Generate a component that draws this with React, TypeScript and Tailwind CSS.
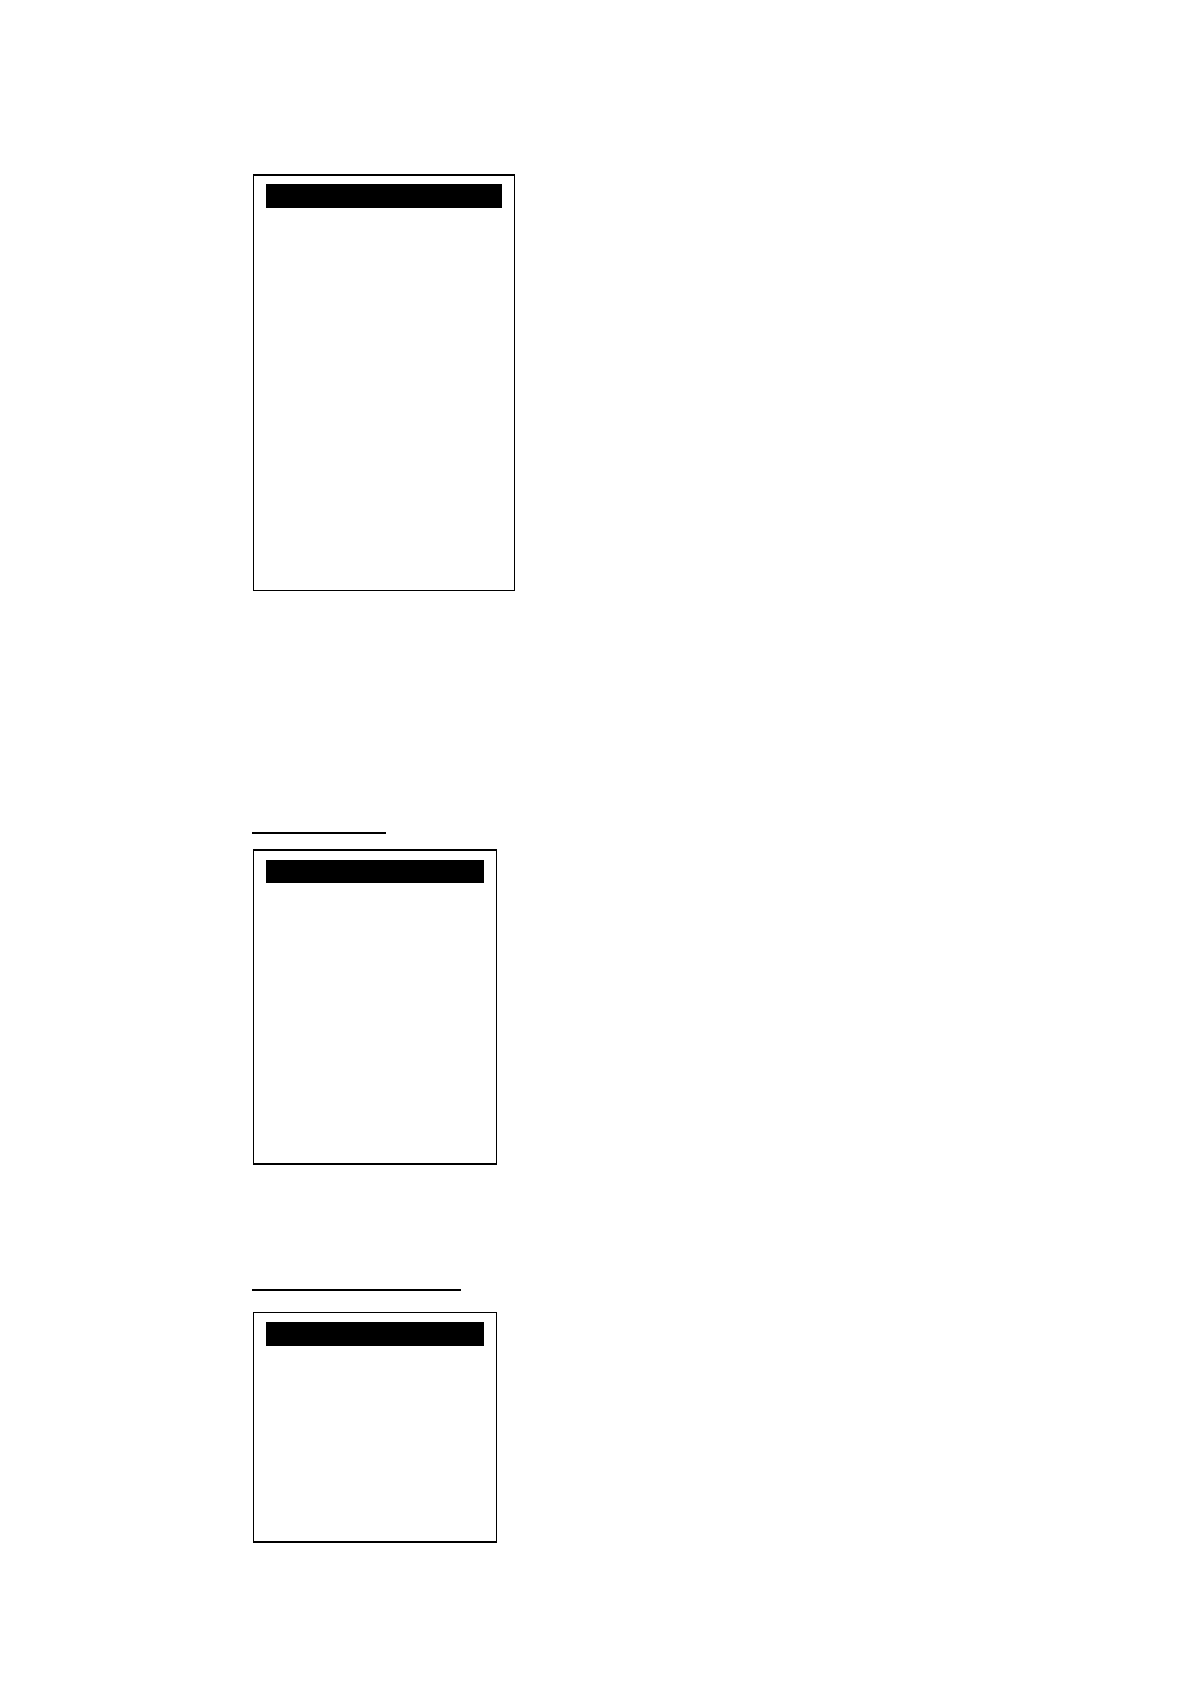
import React, { ReactElement } from "react";

interface PanelProps {
  className: string;
  barClassName: string;
}

function Panel({ className, barClassName }: PanelProps): ReactElement {
  return (
    <section className={`ml-px w-full border-black px-3 ${className}`}>
      <div className={`bg-black ${barClassName}`} />
    </section>
  );
}

export default function App(): ReactElement {
  return (
    <main className="min-h-screen bg-white pt-[174px] pb-32 pl-[252px] pr-8">
      <Panel
        className="max-w-[262px] min-h-[417px] border border-t-2 pt-2"
        barClassName="h-6"
      />

      <div className="mt-[241px]">
        <hr className="w-full max-w-[134px] border-t-2 border-black mb-[15px]" />
        <Panel
          className="max-w-[244px] min-h-[316px] border-x border-y-2 pt-[9px]"
          barClassName="h-[23px]"
        />
      </div>

      <div className="mt-31">
        <hr className="w-full max-w-[209px] border-t-2 border-black mb-[21px]" />
        <Panel
          className="max-w-[244px] min-h-[231px] border border-b-2 pt-[9px]"
          barClassName="h-6"
        />
      </div>
    </main>
  );
}
